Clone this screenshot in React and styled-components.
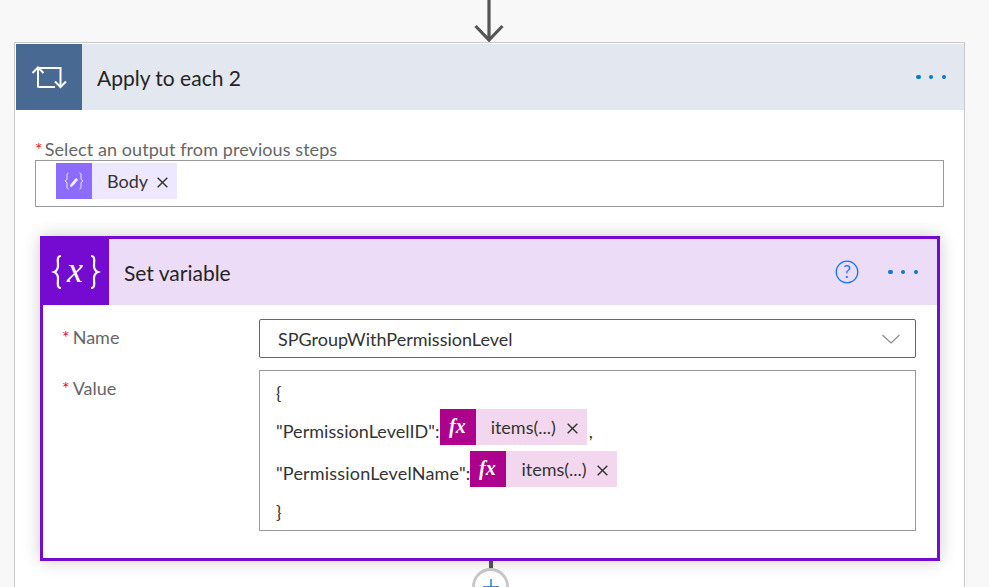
import React from 'react';
import styled, { createGlobalStyle } from 'styled-components';

const Global = createGlobalStyle`
  html, body { margin: 0; padding: 0; background: #f8f8f8; }
  body { font-family: Lato, "Open Sans", "Liberation Sans", sans-serif; overflow: hidden; }
  * { box-sizing: border-box; }
`;

const Page = styled.div`
  width: 989px;
  height: 587px;
  overflow: hidden;
  background: #f8f8f8;
`;

const TopArrow = styled.svg`
  display: block;
  width: 40px;
  height: 42px;
  margin-left: 469px;
`;

const OuterCard = styled.section`
  width: 951px;
  margin-left: 14px;
  background: #fff;
  border: 1px solid #c8c8c8;
  border-bottom: 0;
  padding: 1px 0 0 1px;
`;

const Header = styled.header`
  display: flex;
  align-items: center;
  height: 66px;
  background: ${p => p.$bg};
`;

const IconTile = styled.div`
  flex: none;
  width: 66px;
  height: 66px;
  display: flex;
  align-items: center;
  justify-content: center;
  background: ${p => p.$bg};
`;

const Title = styled.h2`
  flex: 1;
  margin: 0 0 0 15px;
  font-size: 21px;
  font-weight: 400;
  color: #252423;
`;

const Dots = styled.div`
  display: flex;
  gap: 8.3px;
  margin-right: ${p => p.$right}px;
`;

const Dot = styled.i`
  width: 4.4px;
  height: 4.4px;
  border-radius: 50%;
  background: #0078d4;
`;

const HelpIcon = styled.svg`
  width: 24px;
  height: 24px;
  margin-right: 29px;
`;

const OuterBody = styled.div`
  padding: 30px 20px 0 19px;
`;

const StackLabel = styled.label`
  display: block;
  height: 20px;
  font-size: 18px;
  line-height: 18px;
  letter-spacing: 0.08px;
  color: #666;
`;

const Star = styled.span`
  color: #e8112d;
  margin-right: ${p => p.$gap}px;
`;

const TokenBox = styled.div`
  display: flex;
  align-items: flex-start;
  height: 47px;
  padding: 2px 20px;
  border: 1px solid #999;
`;

const Token = styled.span`
  display: inline-flex;
  align-items: center;
  height: 36px;
  width: ${p => p.$width}px;
  flex: none;
  background: ${p => p.$bg};
  color: #333;
  font-size: 18px;
`;

const TokenIcon = styled.span`
  flex: none;
  width: 36px;
  height: 36px;
  display: flex;
  align-items: center;
  justify-content: center;
  background: ${p => p.$bg};
`;

const TokenName = styled.span`
  margin-left: ${p => p.$left}px;
  flex: 1;
`;

const CloseIcon = styled.svg`
  flex: none;
  width: 11px;
  height: 11px;
  margin-right: 9px;
  margin-top: 3px;
`;

const ActionCard = styled.section`
  width: 900px;
  margin: 29px 0 0 5px;
  background: #fff;
  border: 3px solid #750bd0;
  box-shadow: 0 0 16px rgba(0, 0, 0, 0.2);
  position: relative;
`;

const ActionBody = styled.div`
  padding: 14px 21px 27px 19px;
`;

const Row = styled.div`
  display: grid;
  grid-template-columns: 197px 657px;
  margin-bottom: 12px;
  &:last-child { margin-bottom: 0; }
`;

const RowLabel = styled.label`
  font-size: 18px;
  line-height: 20px;
  color: #666;
  padding-top: 8px;
`;

const Select = styled.div`
  display: flex;
  align-items: center;
  justify-content: space-between;
  height: 39px;
  padding: 0 15px 0 18px;
  border: 1px solid #666;
  border-radius: 2px;
  font-size: 18px;
  color: #333;
`;

const ValueBox = styled.div`
  height: 161px;
  padding: 12px 16px 0;
  border: 1px solid #999;
  font-size: 18px;
  color: #333;
`;

const ValueLine = styled.div`
  display: flex;
  align-items: center;
  height: ${p => p.$height}px;
`;

const ValueText = styled.span`
  margin-top: 8px;
  letter-spacing: ${p => p.$track}px;
`;

const Brace = styled.span`
  margin-bottom: ${p => p.$lift}px;
`;

const Comma = styled.span`
  margin-left: 2px;
  margin-top: 8px;
`;

const Connector = styled.div`
  width: 4px;
  height: 7px;
  margin-left: 454px;
  background: #555;
`;

const AddButton = styled.div`
  width: 37px;
  height: 37px;
  margin-left: 437px;
  display: flex;
  align-items: center;
  justify-content: center;
  border: 3px solid #c8c8c8;
  border-radius: 50%;
  background: #fff;
`;

const Close = () => (
  <CloseIcon viewBox="0 0 10 10">
    <path d="M.6.6l8.8 8.8M9.4.6L.6 9.4" stroke="#333" strokeWidth="1.300" fill="none" />
  </CloseIcon>
);

const ThreeDots = ({ right }) => (
  <Dots $right={right}>
    <Dot /><Dot /><Dot />
  </Dots>
);

const FxGlyph = () => (
  <svg width="24" height="24" viewBox="0 0 24 24">
    <text x="3" y="18" fill="#fff" fontFamily="Liberation Serif, serif" fontStyle="italic" fontWeight="700" fontSize="20">fx</text>
  </svg>
);

const FxToken = () => (
  <Token $bg="#f2d7ee" $width={147}>
    <TokenIcon $bg="#ad008c"><FxGlyph /></TokenIcon>
    <TokenName $left={15}>items(...)</TokenName>
    <Close />
  </Token>
);

export default function App() {
  return (
    <Page>
      <Global />
      <TopArrow viewBox="0 0 40 42">
        <path d="M20 0v40M6.500 26L20 40 33.500 26" stroke="#555" strokeWidth="3.200" fill="none" />
      </TopArrow>
      <OuterCard>
        <Header $bg="#e3e8f0">
          <IconTile $bg="#486991">
            <svg width="36" height="24" viewBox="0 0 36 24" fill="none" stroke="#fff" strokeWidth="2">
              <path d="M7 22.500V3H29.500V21" />
              <path d="M7 22H24" />
              <path d="M1.500 8L7 2.500 12.500 8" />
              <path d="M24 16.500l5.500 5.500 5.500-5.500" />
            </svg>
          </IconTile>
          <Title>Apply to each 2</Title>
          <ThreeDots right={18} />
        </Header>
        <OuterBody>
          <StackLabel><Star $gap={2}>*</Star>Select an output from previous steps</StackLabel>
          <TokenBox>
            <Token $bg="#ede8ff" $width={121}>
              <TokenIcon $bg="#8c6cff">
                <svg width="20" height="18" viewBox="0 0 20 18" fill="none" stroke="#fff" strokeWidth="1" opacity=".9">
                  <path d="M4.500 1C2.500 1 3 3 3 5.500 3 7.500 2.500 8.500 1 9c1.500.5 2 1.500 2 3.500C3 15 2.500 17 4.500 17" />
                  <path d="M15.500 1c2 0 1.500 2 1.500 4.500 0 2 .5 3 2 3.500-1.500.5-2 1.500-2 3.500 0 2.500.5 4.500-1.500 4.500" />
                  <path d="M7 12.500l5-6 1.500 1.300-5 6-2 .7z" fill="#fff" />
                </svg>
              </TokenIcon>
              <TokenName $left={15}>Body</TokenName>
              <Close />
            </Token>
          </TokenBox>
          <ActionCard>
            <Header $bg="#ecdcf7">
              <IconTile $bg="#750bd0">
                <svg width="48" height="36" viewBox="0 0 48 36" fill="none" stroke="#fff" strokeWidth="2.200" overflow="visible">
                  <path d="M9 2C4.500 2 6 7 6 12c0 3.500-1.500 5-4 6 2.500 1 4 2.500 4 6 0 5-1.500 10 3 10" />
                  <path d="M39 2c4.500 0 3 5 3 10 0 3.500 1.500 5 4 6-2.500 1-4 2.500-4 6 0 5 1.500 10-3 10" />
                  <text x="15" y="28" stroke="none" fill="#fff" fontFamily="Liberation Serif, serif" fontStyle="italic" fontSize="36">x</text>
                </svg>
              </IconTile>
              <Title>Set variable</Title>
              <HelpIcon viewBox="0 0 24 24">
                <circle cx="12" cy="12" r="10.800" fill="none" stroke="#0f7bff" strokeWidth="1.300" />
                <text x="12" y="18" textAnchor="middle" fill="#0f7bff" fontSize="17" fontFamily="Lato, sans-serif">?</text>
              </HelpIcon>
              <ThreeDots right={19} />
            </Header>
            <ActionBody>
              <Row>
                <RowLabel><Star $gap={3}>*</Star>Name</RowLabel>
                <Select>
                  SPGroupWithPermissionLevel
                  <svg width="18" height="10" viewBox="0 0 18 10" fill="none" stroke="#888" strokeWidth="1.100">
                    <path d="M.5 1L9 9l8.500-8" />
                  </svg>
                </Select>
              </Row>
              <Row>
                <RowLabel><Star $gap={3}>*</Star>Value</RowLabel>
                <ValueBox>
                  <ValueLine $height={23}><Brace $lift={4}>{'{'}</Brace></ValueLine>
                  <ValueLine $height={42}><ValueText $track={0.05}>"PermissionLevelID":</ValueText><FxToken /><Comma>,</Comma></ValueLine>
                  <ValueLine $height={42}><ValueText $track={0.19}>"PermissionLevelName":</ValueText><FxToken /></ValueLine>
                  <ValueLine $height={44}><Brace $lift={0}>{'}'}</Brace></ValueLine>
                </ValueBox>
              </Row>
            </ActionBody>
          </ActionCard>
          <Connector />
          <AddButton>
            <svg width="16" height="16" viewBox="0 0 16 16" stroke="#0f6cbd" strokeWidth="1.300">
              <path d="M8 0v16M0 8h16" />
            </svg>
          </AddButton>
        </OuterBody>
      </OuterCard>
    </Page>
  );
}
